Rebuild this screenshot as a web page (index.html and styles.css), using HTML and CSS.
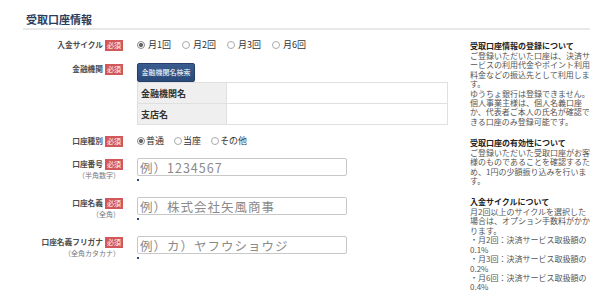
FILE: index.html
```html
<!DOCTYPE html>
<html lang="ja">
<head>
    <meta charset="UTF-8">
    <meta name="viewport" content="width=device-width, initial-scale=1.0">
    <title>受取口座情報</title>
    <link rel="stylesheet" href="styles.css">
</head>
<body>
    <div class="page">
        <h2 class="section-title">受取口座情報</h2>

        <div class="content">
            <section class="form">
                <!-- 入金サイクル -->
                <div class="form-row row-cycle">
                    <div class="label"><span class="label-name">入金サイクル</span><span class="req">必須</span></div>
                    <div class="field radios">
                        <label class="radio"><input type="radio" name="cycle" checked>月1回</label>
                        <label class="radio"><input type="radio" name="cycle">月2回</label>
                        <label class="radio"><input type="radio" name="cycle">月3回</label>
                        <label class="radio"><input type="radio" name="cycle">月6回</label>
                    </div>
                </div>

                <!-- 金融機関 -->
                <div class="form-row row-bank">
                    <div class="label"><span class="label-name">金融機関</span><span class="req">必須</span></div>
                    <div class="field">
                        <button class="search-button">金融機関名検索</button>
                        <table class="bank-table">
                            <tr><th>金融機関名</th><td></td></tr>
                            <tr><th>支店名</th><td></td></tr>
                        </table>
                    </div>
                </div>

                <!-- 口座種別 -->
                <div class="form-row row-type">
                    <div class="label"><span class="label-name">口座種別</span><span class="req">必須</span></div>
                    <div class="field radios tight">
                        <label class="radio"><input type="radio" name="type" checked>普通</label>
                        <label class="radio"><input type="radio" name="type">当座</label>
                        <label class="radio"><input type="radio" name="type">その他</label>
                    </div>
                </div>

                <!-- 口座番号 -->
                <div class="form-row row-input">
                    <div class="label">
                        <div><span class="label-name">口座番号</span><span class="req">必須</span></div>
                        <div class="sub-label">（半角数字）</div>
                    </div>
                    <div class="field">
                        <input class="text-input" type="text" placeholder="例）1234567">
                        <div class="error-mark"></div>
                    </div>
                </div>

                <!-- 口座名義 -->
                <div class="form-row row-input">
                    <div class="label">
                        <div><span class="label-name">口座名義</span><span class="req">必須</span></div>
                        <div class="sub-label">（全角）</div>
                    </div>
                    <div class="field">
                        <input class="text-input" type="text" placeholder="例）株式会社矢風商事">
                        <div class="error-mark"></div>
                    </div>
                </div>

                <!-- 口座名義フリガナ -->
                <div class="form-row row-input">
                    <div class="label">
                        <div><span class="label-name">口座名義フリガナ</span><span class="req">必須</span></div>
                        <div class="sub-label">（全角カタカナ）</div>
                    </div>
                    <div class="field">
                        <input class="text-input" type="text" placeholder="例）カ）ヤフウショウジ">
                        <div class="error-mark"></div>
                    </div>
                </div>
            </section>

            <aside class="notes">
                <div class="note">
                    <h3>受取口座情報の登録について</h3>
                    <p>ご登録いただいた口座は、決済サ<br>ービスの利用代金やポイント利用<br>料金などの振込先として利用しま<br>す。<br>ゆうちょ銀行は登録できません。<br>個人事業主様は、個人名義口座<br>か、代表者ご本人の氏名が確認で<br>きる口座のみ登録可能です。</p>
                </div>
                <div class="note">
                    <h3>受取口座の有効性について</h3>
                    <p>ご登録いただいた受取口座がお客<br>様のものであることを確認するた<br>め、1円の少額振り込みを行いま<br>す。</p>
                </div>
                <div class="note">
                    <h3>入金サイクルについて</h3>
                    <p>月2回以上のサイクルを選択した<br>場合は、オプション手数料がかか<br>ります。<br>・月2回：決済サービス取扱額の<br>0.1%<br>・月3回：決済サービス取扱額の<br>0.2%<br>・月6回：決済サービス取扱額の<br>0.4%</p>
                </div>
            </aside>
        </div>
    </div>
</body>
</html>
```

FILE: styles.css
```css
body {
    margin: 0;
    font-family: "Noto Sans CJK JP", "Noto Sans", sans-serif;
    background-color: #fff;
    color: #444;
}

.page {
    padding: 12px 10px 0 23px;
}

.section-title {
    margin: 0;
    padding: 0 0 2px 3px;
    font-size: 11px;
    line-height: 14px;
    font-weight: bold;
    color: #2b3d5f;
    border-bottom: 2px solid #e8e8e8;
}

.content {
    display: flex;
    margin-top: 9px;
}

.form {
    width: 425px;
}

.form-row {
    display: grid;
    grid-template-columns: 100px 1fr;
    column-gap: 14px;
}

.row-cycle {
    margin-bottom: 12px;
}

.row-bank {
    margin-bottom: 10px;
}

.row-type {
    margin-bottom: 11px;
}

.row-input {
    margin-bottom: 16px;
}

/* ラベル */
.label {
    text-align: right;
    font-size: 7.7px;
    line-height: 12px;
}

.label-name {
    font-weight: bold;
    color: #4d4d4d;
}

.req {
    display: inline-block;
    margin-left: 2px;
    padding: 0 2px;
    background-color: #d2575a;
    color: #fff;
    font-size: 7px;
    line-height: 11px;
    vertical-align: top;
    margin-top: 0.5px;
}

.sub-label {
    font-size: 7px;
    line-height: 11px;
    color: #777;
    padding-right: 3px;
}

/* ラジオボタン */
.radios {
    display: flex;
    gap: 11px;
    font-size: 9px;
    line-height: 12px;
    color: #333;
}

.radio {
    display: flex;
    align-items: center;
}

.radio input {
    appearance: none;
    width: 8px;
    height: 8px;
    margin: 0 3px 0 0;
    border: 1px solid #aaa;
    border-radius: 50%;
    background-color: #fff;
    box-sizing: border-box;
}

.radio input:checked {
    border-color: #888;
    background: radial-gradient(circle, #666 0 2px, #fff 2.2px);
}

.radios.tight {
    gap: 10px;
}

.radios.tight .radio input {
    margin-right: 1px;
}

/* 金融機関 */
.search-button {
    display: block;
    width: 58px;
    height: 19px;
    padding: 0;
    border: 1px solid #243f69;
    border-radius: 2px;
    background: linear-gradient(#3a5c8f, #2a4a7a);
    color: #fff;
    font-family: inherit;
    font-size: 7px;
    line-height: 17px;
    box-shadow: 0 1px 1px rgba(0, 0, 0, 0.2);
}

.bank-table {
    width: 311px;
    border-collapse: collapse;
}

.bank-table th,
.bank-table td {
    height: 20px;
    padding: 0;
    border: 1px solid #e0e0e0;
}

.bank-table th {
    width: 85px;
    padding-left: 3px;
    background-color: #efefef;
    text-align: left;
    font-size: 9px;
    font-weight: bold;
    color: #333;
}

/* 入力欄 */
.text-input {
    display: block;
    width: 210px;
    height: 18px;
    margin: 0;
    padding: 0 2px;
    border: 1px solid #c8c8c8;
    border-radius: 2px;
    box-sizing: border-box;
    font-family: inherit;
    font-size: 12.5px;
    letter-spacing: 1px;
    color: #333;
}

.text-input::placeholder {
    color: #8a8a8a;
}

.error-mark {
    width: 2px;
    height: 2px;
    margin-top: 3px;
    background-color: #2d4b7a;
}

/* 右側の説明 */
.notes {
    width: 124px;
    margin-left: 22px;
    margin-top: 2px;
    font-size: 8px;
    line-height: 9.4px;
}

.note {
    margin-bottom: 11.6px;
}

.note h3 {
    margin: 0 0 0.6px;
    font-size: 8px;
    font-weight: bold;
    color: #222;
}

.note p {
    margin: 0;
    color: #555;
}
```
